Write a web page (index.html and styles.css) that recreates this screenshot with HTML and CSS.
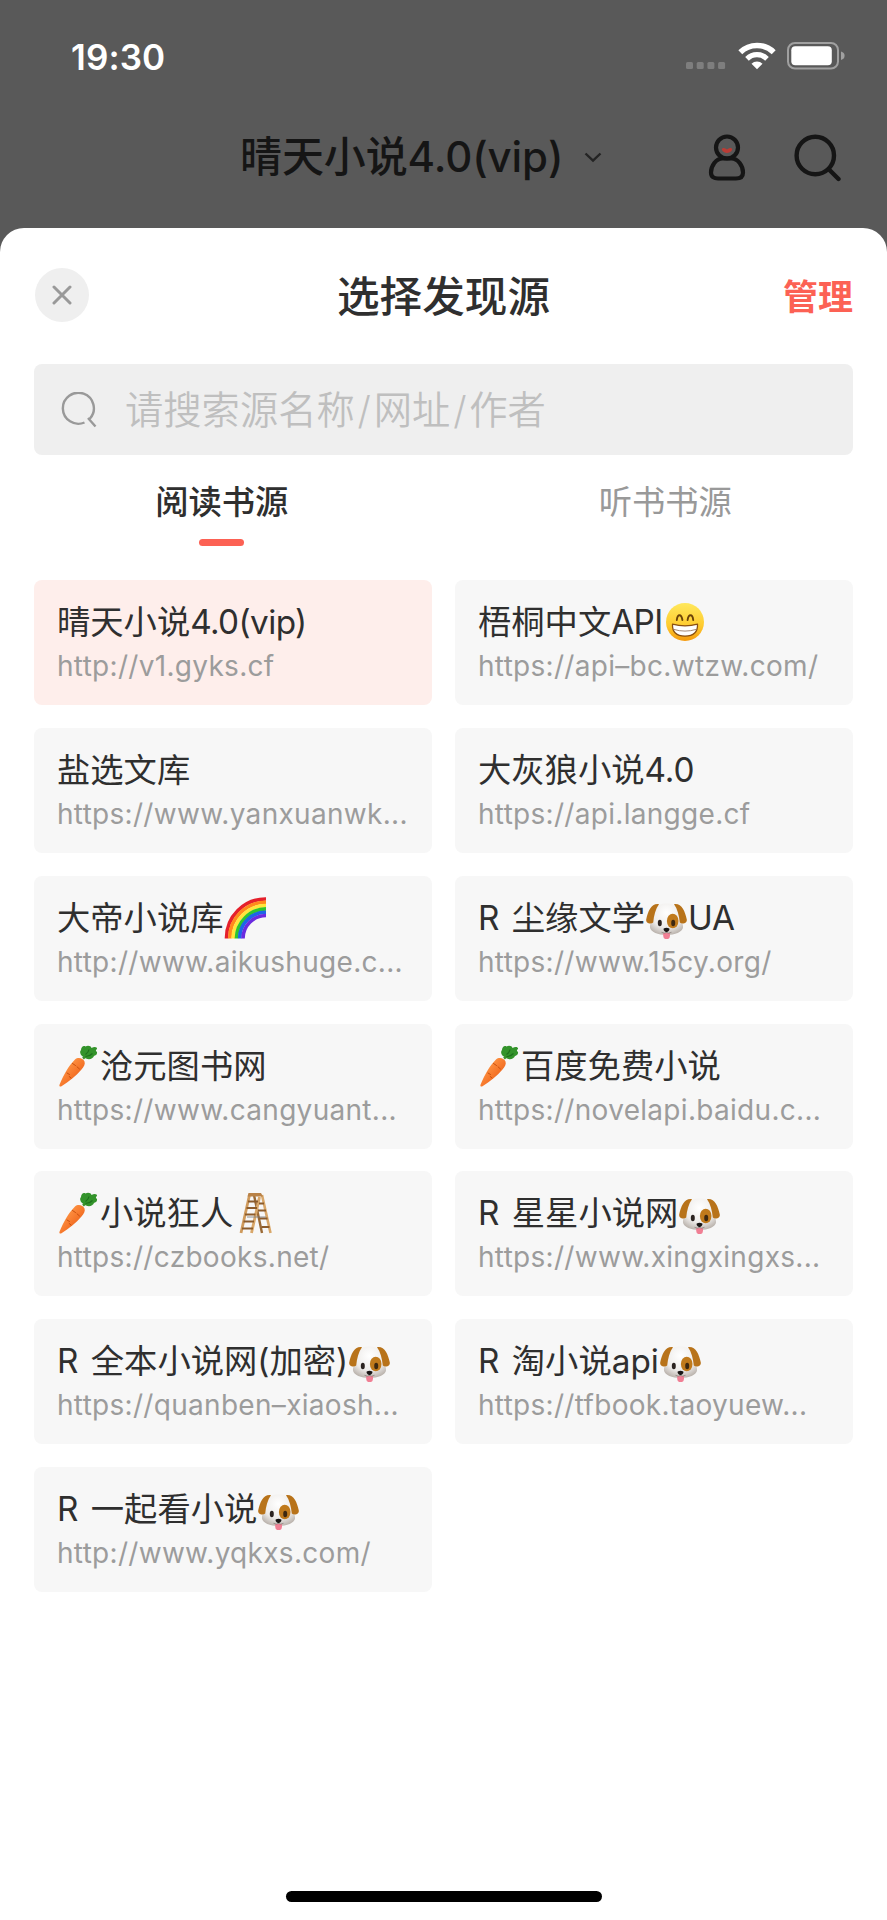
FILE: index.html
```html
<!DOCTYPE html>
<html lang="zh-CN">
<head>
  <meta charset="UTF-8" />
  <meta name="viewport" content="width=device-width, initial-scale=1.0"/>
  <title>选择发现源</title>
  <link rel="stylesheet" href="styles.css">
</head>
<body>
  <!-- Emoji symbols -->
  <svg class="sprite" aria-hidden="true">
    <defs>
      <linearGradient id="gFace" x1="0" y1="0" x2="0" y2="1">
        <stop offset="0" stop-color="#ffe85c"/><stop offset=".6" stop-color="#fecb2f"/><stop offset="1" stop-color="#f59a0e"/>
      </linearGradient>
      <radialGradient id="gDog" cx=".5" cy=".3" r=".7">
        <stop offset="0" stop-color="#ffffff"/><stop offset=".65" stop-color="#eeecea"/><stop offset="1" stop-color="#bdb6b0"/>
      </radialGradient>
      <linearGradient id="gCarrot" x1="0" y1="0" x2="1" y2="1">
        <stop offset=".2" stop-color="#ff9a4a"/><stop offset=".55" stop-color="#f6772b"/><stop offset="1" stop-color="#d94e10"/>
      </linearGradient>
    </defs>
    <symbol id="grin" viewBox="0 0 43 42">
      <circle cx="22" cy="21" r="19" fill="url(#gFace)"/>
      <path d="M13.800 19q.5-4.800 2.700-4.800t2.900 4.800M24.600 19q.6-4.800 2.900-4.800t2.700 4.800" fill="none" stroke="#6b4208" stroke-width="1.900" stroke-linecap="round"/>
      <path d="M9.500 23.200q12.500 3.400 25 0 .6 11.600-12.500 11.900-13.100-.3-12.500-11.900z" fill="#fff" stroke="#8a4f12" stroke-width="1.300" stroke-linejoin="round"/>
      <path d="M10.500 28.300q11.500 3.600 23 0" fill="none" stroke="#a58a78" stroke-width="1"/>
    </symbol>
    <symbol id="rainbow" viewBox="0 0 43 42">
      <g fill="none" stroke-width="3.600">
        <path d="M3.500 41.500A39 39 0 0 1 43 2" stroke="#e5202b"/>
        <path d="M6.800 41.500A36 36 0 0 1 43 5.300" stroke="#ff8a1c"/>
        <path d="M10.100 41.500A33 33 0 0 1 43 8.600" stroke="#ffe53b"/>
        <path d="M13.400 41.500A30 30 0 0 1 43 11.900" stroke="#2fc52e"/>
        <path d="M16.700 41.500A26 26 0 0 1 43 15.200" stroke="#1c66e8"/>
        <path d="M20 41.500A23 23 0 0 1 43 18.500" stroke="#6a2be0"/>
      </g>
    </symbol>
    <symbol id="dog" viewBox="0 0 43 42">
      <path d="M21.500 6.500C13 6 9.500 11 8.800 19 8 23 4.500 26 5 30.500 5.500 35 13 38 21.500 38s16-3 16.500-7.500C38.500 26 35 23 34.200 19 33.500 11 30 6 21.500 6.500z" fill="url(#gDog)"/>
      <path d="M14 7.200C6.500 6 3 14 1.200 22.500c-.5 3.800 4.500 5 7 3C9 18 10.500 12 14 7.200z" fill="#b8731a"/>
      <path d="M29 7.200c7.500-1.200 11 6.800 12.800 15.300.5 3.800-4.500 5-7 3C34 18 32.500 12 29 7.200z" fill="#b8731a"/>
      <ellipse cx="27.700" cy="24" rx="5.800" ry="7.300" fill="#c07a1c"/>
      <ellipse cx="14.800" cy="26" rx="2" ry="3.200" fill="#2b2320"/>
      <ellipse cx="28.200" cy="26" rx="2" ry="3.200" fill="#3d2810"/>
      <path d="M18.200 36h6.800v2.800a3.400 3.400 0 0 1-6.800 0z" fill="#f07f94"/>
      <path d="M16.500 35.300q3.500 1.800 5 0 1.500 1.800 5 0" fill="none" stroke="#8b827c" stroke-width=".8"/>
      <path d="M18.700 31.400q2.800-1.300 5.600 0 .8 2.200-2.800 3.900-3.600-1.700-2.800-3.900z" fill="#171413"/>
    </symbol>
    <symbol id="carrot" viewBox="0 0 43 42">
      <path d="M26 13.500l7-6" stroke="#3f8f2a" stroke-width="2.500"/>
      <path d="M25 11c-2-2-2.500-4.500-1-6 0-3 2.500-5 4.500-3.500C31 0 34 1 34.500 3c3-2 6-1 5.500 1-1.500 1-1.500 2 0 3 .5 3-2 3.500-3 4-1 3-5 4-8 2.500z" fill="#33932b"/>
      <path d="M28.500 9.500q3-2 3.500-5M28.500 11.500q4 0 7-3" stroke="#1e701d" fill="none" stroke-width="1.200"/>
      <path d="M18 14.500c3-2.500 8-1.500 9.500 2 1 2.600-.7 5.500-3 8C19 31 12 36.500 4.500 41.200c-1.500.8-2.500 0-2-1.500C6.500 30.500 11 21.500 18 14.500z" fill="url(#gCarrot)"/>
      <path d="M15.500 18.500l3 2M22.500 24l-2.500-2.200M10 28l2.500 1.500M14 33l-1.800-1.500" stroke="#c9500f" stroke-width="1" stroke-linecap="round"/>
    </symbol>
    <symbol id="ladder" viewBox="0 0 43 42">
      <path d="M21 3l8 38" stroke="#9b6a36" stroke-width="2.400"/>
      <path d="M16.500 3L8 41" stroke="#cf9a5c" stroke-width="2.800"/>
      <path d="M29 3l8.500 38" stroke="#d9a769" stroke-width="2.600"/>
      <path d="M26.500 5L18.500 41" stroke="#d9a769" stroke-width="2.800"/>
      <path d="M15 9.500h10M13.500 16h10.500M12 22.500h10.500M10.500 29.500h10.500M9 36.500h11M26 11.500h5M25 18.500h8M26.500 26.500h8M28.500 35h8" stroke="#8c5c2c" stroke-width="2"/>
      <path d="M14 25h19" stroke="#777" stroke-width=".8"/>
      <path d="M15.500 1h12.500l2 3.500H14.500z" fill="#b98247"/>
    </symbol>
  </svg>

  <div class="screen">
    <!-- Status bar -->
    <div class="status-bar">
      <span class="time">19:30</span>
      <div class="status-icons">
        <svg class="dots" viewBox="0 0 40 8" fill="#7e7e7e">
          <rect x="0" y="0" width="7" height="7" rx="1.500"/><rect x="10.700" y="0" width="7" height="7" rx="1.500"/>
          <rect x="21.400" y="0" width="7" height="7" rx="1.500"/><rect x="32.100" y="0" width="7" height="7" rx="1.500"/>
        </svg>
        <svg class="wifi" viewBox="0 0 38 28" fill="none" stroke="#fff">
          <path d="M2.300 10.200a24 24 0 0 1 33.400 0" stroke-width="5.600"/>
          <path d="M9 16.800a14.300 14.300 0 0 1 20 0" stroke-width="5.200"/>
          <path d="M19 27.300l-5.500-5.500a7.800 7.800 0 0 1 11 0z" fill="#fff" stroke="none"/>
        </svg>
        <svg class="battery" viewBox="0 0 58 28">
          <rect x="1" y="1" width="50" height="25.500" rx="7" fill="none" stroke="#a0a0a0" stroke-width="2"/>
          <rect x="4.300" y="4.300" width="40.500" height="19" rx="4" fill="#fff"/>
          <path d="M54 9.500q3.600 1 3.600 4.200T54 18z" fill="#a0a0a0"/>
        </svg>
      </div>
    </div>

    <!-- Page header behind the sheet -->
    <header class="page-header">
      <div class="page-title">
        <span>晴天小说4.0(vip)</span>
        <svg class="chevron" viewBox="0 0 18 11" fill="none" stroke="#242424" stroke-width="2.400"><path d="M1.500 1.500L9 8.700l7.500-7.200"/></svg>
      </div>
      <svg class="icon-user" viewBox="0 0 38 47" fill="none" stroke="#151515" stroke-width="4.200">
        <circle cx="19" cy="13.500" r="11"/>
        <path d="M14.500 24.500h9C30 24.500 35 32 35 38.500c0 4.500-3 6-7 6H10c-4 0-7-1.500-7-6 0-6.500 5-14 11.500-14z"/>
        <path d="M14.500 14.200q1.500-.6 4.500 1.300 3-1.900 4.500-1.300 1.500.8 0 2.800-4.500 4-9 0-1.500-2 0-2.800z" fill="#bb3c35" stroke="none"/>
      </svg>
      <svg class="icon-search" viewBox="0 0 48 48" fill="none" stroke="#151515" stroke-width="4.400" stroke-linecap="round">
        <circle cx="21.300" cy="21.500" r="18.700"/><path d="M35 35.500l9.500 9.500"/>
      </svg>
    </header>

    <!-- Source sheet -->
    <main class="sheet">
      <div class="sheet-header">
        <button class="close">
          <svg viewBox="0 0 20 20" stroke="#999" stroke-width="3" stroke-linecap="round"><path d="M2 2l16 16M18 2L2 18"/></svg>
        </button>
        <h1>选择发现源</h1>
        <a class="manage">管理</a>
      </div>

      <div class="search">
        <svg viewBox="0 0 36 36" fill="none" stroke="#999" stroke-width="2.400"><path d="M23.500 30.500A15.500 15.500 0 1 1 29 26.500M27 26l7.500 8.500"/></svg>
        <div class="placeholder">请搜索源名称<span class="slash">/</span>网址<span class="slash">/</span>作者</div>
      </div>

      <nav class="tabs">
        <div class="tab active">阅读书源</div>
        <div class="tab">听书书源</div>
      </nav>

      <div class="grid">
        <div class="card selected"><div class="name">晴天小说<span class="latin">4.0(vip)</span></div><div class="url">http://v1.gyks.cf</div></div>
        <div class="card"><div class="name">梧桐中文<span class="latin">API</span><svg><use href="#grin"/></svg></div><div class="url">https://api–bc.wtzw.com/</div></div>
        <div class="card"><div class="name">盐选文库</div><div class="url">https://www.yanxuanwk...</div></div>
        <div class="card"><div class="name">大灰狼小说4.0</div><div class="url">https://api.langge.cf</div></div>
        <div class="card"><div class="name">大帝小说库<svg><use href="#rainbow"/></svg></div><div class="url">http://www.aikushuge.c...</div></div>
        <div class="card"><div class="name">R 尘缘文学<svg><use href="#dog"/></svg>UA</div><div class="url">https://www.15cy.org/</div></div>
        <div class="card"><div class="name"><svg><use href="#carrot"/></svg>沧元图书网</div><div class="url">https://www.cangyuant...</div></div>
        <div class="card"><div class="name"><svg><use href="#carrot"/></svg>百度免费小说</div><div class="url">https://novelapi.baidu.c...</div></div>
        <div class="card"><div class="name"><svg><use href="#carrot"/></svg>小说狂人<svg><use href="#ladder"/></svg></div><div class="url">https://czbooks.net/</div></div>
        <div class="card"><div class="name">R 星星小说网<svg><use href="#dog"/></svg></div><div class="url">https://www.xingxingxs...</div></div>
        <div class="card"><div class="name">R 全本小说网(加密)<svg><use href="#dog"/></svg></div><div class="url">https://quanben–xiaosh...</div></div>
        <div class="card"><div class="name">R 淘小说api<svg><use href="#dog"/></svg></div><div class="url">https://tfbook.taoyuew...</div></div>
        <div class="card"><div class="name">R 一起看小说<svg><use href="#dog"/></svg></div><div class="url">http://www.yqkxs.com/</div></div>
      </div>

      <div class="home-indicator"></div>
    </main>
  </div>
</body>
</html>
```

FILE: styles.css
```css
:root {
  --accent-color: #fc6154;
  --text-color: #2f2f2f;
  --muted-color: #999;
  --card-color: #f7f7f7;
  --font-sans: Inter, "Noto Sans CJK SC", sans-serif;
}

* {
  box-sizing: border-box;
}

body {
  margin: 0;
  font-family: var(--font-sans);
  color: var(--text-color);
  background: #595959;
}

.sprite {
  position: absolute;
  width: 0;
  height: 0;
}

.screen {
  display: flex;
  flex-direction: column;
  width: 887px;
  height: 1920px;
  overflow: hidden;
}

/* Status bar */
.status-bar {
  display: flex;
  justify-content: space-between;
  align-items: center;
  height: 112px;
  padding: 0 42px 0 71px;
}

.time {
  padding-top: 1px;
  color: #fff;
  font-size: 35px;
  font-weight: 600;
  letter-spacing: 0.1px;
}

.status-icons {
  display: flex;
  align-items: flex-end;
}

.dots {
  width: 40px;
  height: 8px;
  margin-right: 12px;
}

.wifi {
  width: 38px;
  height: 28px;
  margin-right: 11px;
}

.battery {
  width: 58px;
  height: 28px;
}

/* Page header */
.page-header {
  display: flex;
  align-items: center;
  height: 91px;
  padding: 0 45px 0 240px;
  margin-bottom: 25px;
}

.page-title {
  display: flex;
  align-items: center;
  flex: 1;
  gap: 21px;
  color: #151515;
  font-size: 42px;
  font-weight: 500;
  line-height: 56px;
  letter-spacing: -0.1px;
  white-space: nowrap;
}

.page-title span {
  padding-bottom: 1px;
}

.chevron {
  width: 18px;
  height: 11px;
}

.icon-user {
  width: 38px;
  height: 47px;
  margin-right: 48px;
}

.icon-search {
  width: 48px;
  height: 48px;
}

/* Sheet */
.sheet {
  display: flex;
  flex-direction: column;
  flex: 1;
  padding: 40px 34px 18px;
  background: #fff;
  border-radius: 24px 24px 0 0;
}

.sheet-header {
  display: grid;
  grid-template-columns: 1fr auto 1fr;
  align-items: center;
  height: 54px;
  margin-bottom: 42px;
}

.close {
  display: flex;
  align-items: center;
  justify-content: center;
  width: 54px;
  height: 54px;
  margin-left: 1px;
  padding: 0;
  border: none;
  border-radius: 50%;
  background: #efefef;
}

.close svg {
  width: 20px;
  height: 20px;
}

h1 {
  margin: 0;
  padding-top: 3px;
  font-size: 42.600px;
  font-weight: 500;
  line-height: 51px;
}

.manage {
  justify-self: end;
  padding-bottom: 1px;
  color: var(--accent-color);
  font-size: 35px;
  font-weight: 700;
}

.search {
  display: flex;
  align-items: center;
  gap: 28px;
  height: 91px;
  padding: 0 27px;
  border-radius: 8px;
  background: #efefef;
  color: #bfbfbf;
  font-size: 38.300px;
  font-weight: 350;
}

.search svg {
  width: 36px;
  height: 36px;
}

.placeholder {
  padding-bottom: 4px;
}

.slash {
  margin: 0 2.800px;
}

.tabs {
  display: flex;
  margin: 0 -34px;
  height: 125px;
}

.tab {
  display: flex;
  flex-direction: column;
  align-items: center;
  flex: 1;
  padding-top: 22px;
  color: var(--muted-color);
  font-size: 33.300px;
  font-weight: 400;
  line-height: 50px;
}

.tab.active {
  color: var(--text-color);
  font-weight: 500;
}

.tab.active::after {
  content: "";
  width: 45px;
  height: 7px;
  margin-top: 12px;
  border-radius: 4px;
  background: var(--accent-color);
}

/* Source cards */
.grid {
  display: grid;
  grid-template-columns: 1fr 1fr;
  grid-auto-rows: 125px;
  gap: 22.850px 23px;
}

.card {
  min-width: 0;
  padding: 21px 0 0 23px;
  border-radius: 8px;
  background: var(--card-color);
}

.card.selected {
  background: #feeeeb;
}

.name {
  display: flex;
  align-items: center;
  height: 42px;
  font-size: 33.300px;
  line-height: 42px;
  white-space: pre;
  word-spacing: 3px;
}

.latin {
  letter-spacing: -0.600px;
}

.name svg {
  width: 43px;
  height: 42px;
}

.url {
  color: #9c9c9c;
  font-size: 28px;
  font-weight: 400;
  line-height: 46px;
  letter-spacing: 0.300px;
  white-space: nowrap;
}

.home-indicator {
  width: 316px;
  height: 11px;
  margin: auto auto 0;
  border-radius: 6px;
  background: #000;
}
```
